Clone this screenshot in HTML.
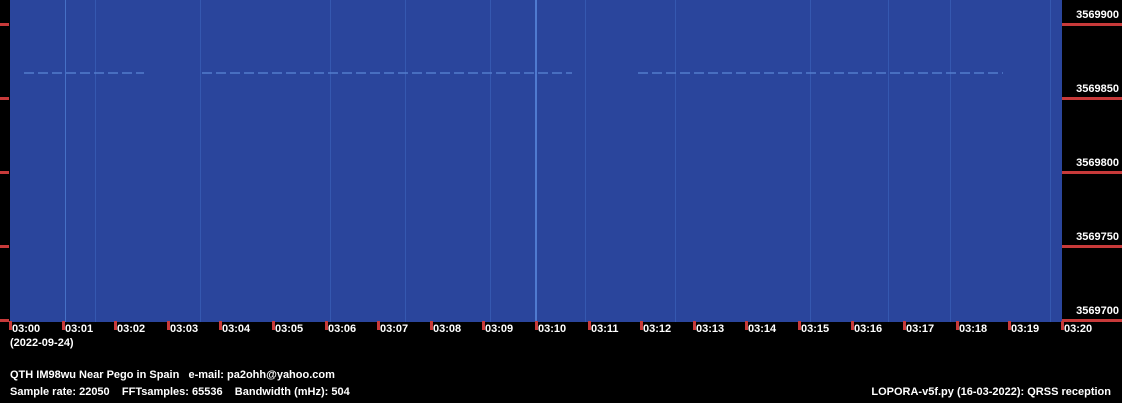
<!DOCTYPE html><html><head><style>
body{margin:0;width:1122px;height:403px;background:#000;position:relative;overflow:hidden;font-family:"Liberation Sans",sans-serif;font-weight:bold;font-size:11px;color:#fff}
.sp{position:absolute;left:10px;top:0;width:1052px;height:322px;background:#2a459c}
.v{position:absolute;top:0;height:322px;width:1px;background:#3558b0}
.rt{position:absolute;height:3px;background:#c83a3a}
.bt{position:absolute;top:321px;width:3px;height:9px;background:#c83a3a}
.t{position:absolute;white-space:pre}
.fl{position:absolute;right:3px;text-align:right}
.d{position:absolute;top:72px;height:2px;background:repeating-linear-gradient(90deg,#5580d0 0 10px,transparent 10px 14px);opacity:.7}
</style></head><body>
<div class="sp">
<div class="v" style="left:55px;background:#4670c6"></div>
<div class="v" style="left:85px"></div>
<div class="v" style="left:190px"></div>
<div class="v" style="left:320px"></div>
<div class="v" style="left:395px"></div>
<div class="v" style="left:480px"></div>
<div class="v" style="left:525px;width:2px;background:#4f7ad0"></div>
<div class="v" style="left:575px"></div>
<div class="v" style="left:665px"></div>
<div class="v" style="left:800px"></div>
<div class="v" style="left:878px"></div>
<div class="v" style="left:940px"></div>
<div class="v" style="left:1040px"></div>
<div class="d" style="left:14px;width:120px"></div>
<div class="d" style="left:192px;width:370px"></div>
<div class="d" style="left:628px;width:365px"></div>
</div>
<div class="rt" style="left:0;width:9px;top:23px"></div>
<div class="rt" style="left:0;width:9px;top:97px"></div>
<div class="rt" style="left:0;width:9px;top:171px"></div>
<div class="rt" style="left:0;width:9px;top:245px"></div>
<div class="rt" style="left:0;width:9px;top:319px"></div>
<div class="rt" style="left:1062px;width:60px;top:23px"></div>
<div class="rt" style="left:1062px;width:60px;top:97px"></div>
<div class="rt" style="left:1062px;width:60px;top:171px"></div>
<div class="rt" style="left:1062px;width:60px;top:245px"></div>
<div class="rt" style="left:1062px;width:60px;top:319px"></div>
<div class="t fl" style="top:9px">3569900</div>
<div class="t fl" style="top:83px">3569850</div>
<div class="t fl" style="top:157px">3569800</div>
<div class="t fl" style="top:231px">3569750</div>
<div class="t fl" style="top:305px">3569700</div>
<div id="ticks"></div>
<script>
var h='';for(var i=0;i<=20;i++){var x=Math.round(10+i*52.6);h+='<div class="bt" style="left:'+(x-1)+'px"></div><div class="t" style="left:'+(x+2)+'px;top:323px">03:'+(i<10?'0':'')+i+'</div>';}
document.getElementById('ticks').innerHTML=h;
</script>
<div class="t" style="left:10px;top:337px">(2022-09-24)</div>
<div class="t" style="left:10px;top:369px">QTH IM98wu Near Pego in Spain   e-mail: pa2ohh@yahoo.com</div>
<div class="t" style="left:10px;top:386px">Sample rate: 22050    FFTsamples: 65536    Bandwidth (mHz): 504</div>
<div class="t" style="right:11px;top:386px">LOPORA-v5f.py (16-03-2022): QRSS reception</div>
</body></html>
